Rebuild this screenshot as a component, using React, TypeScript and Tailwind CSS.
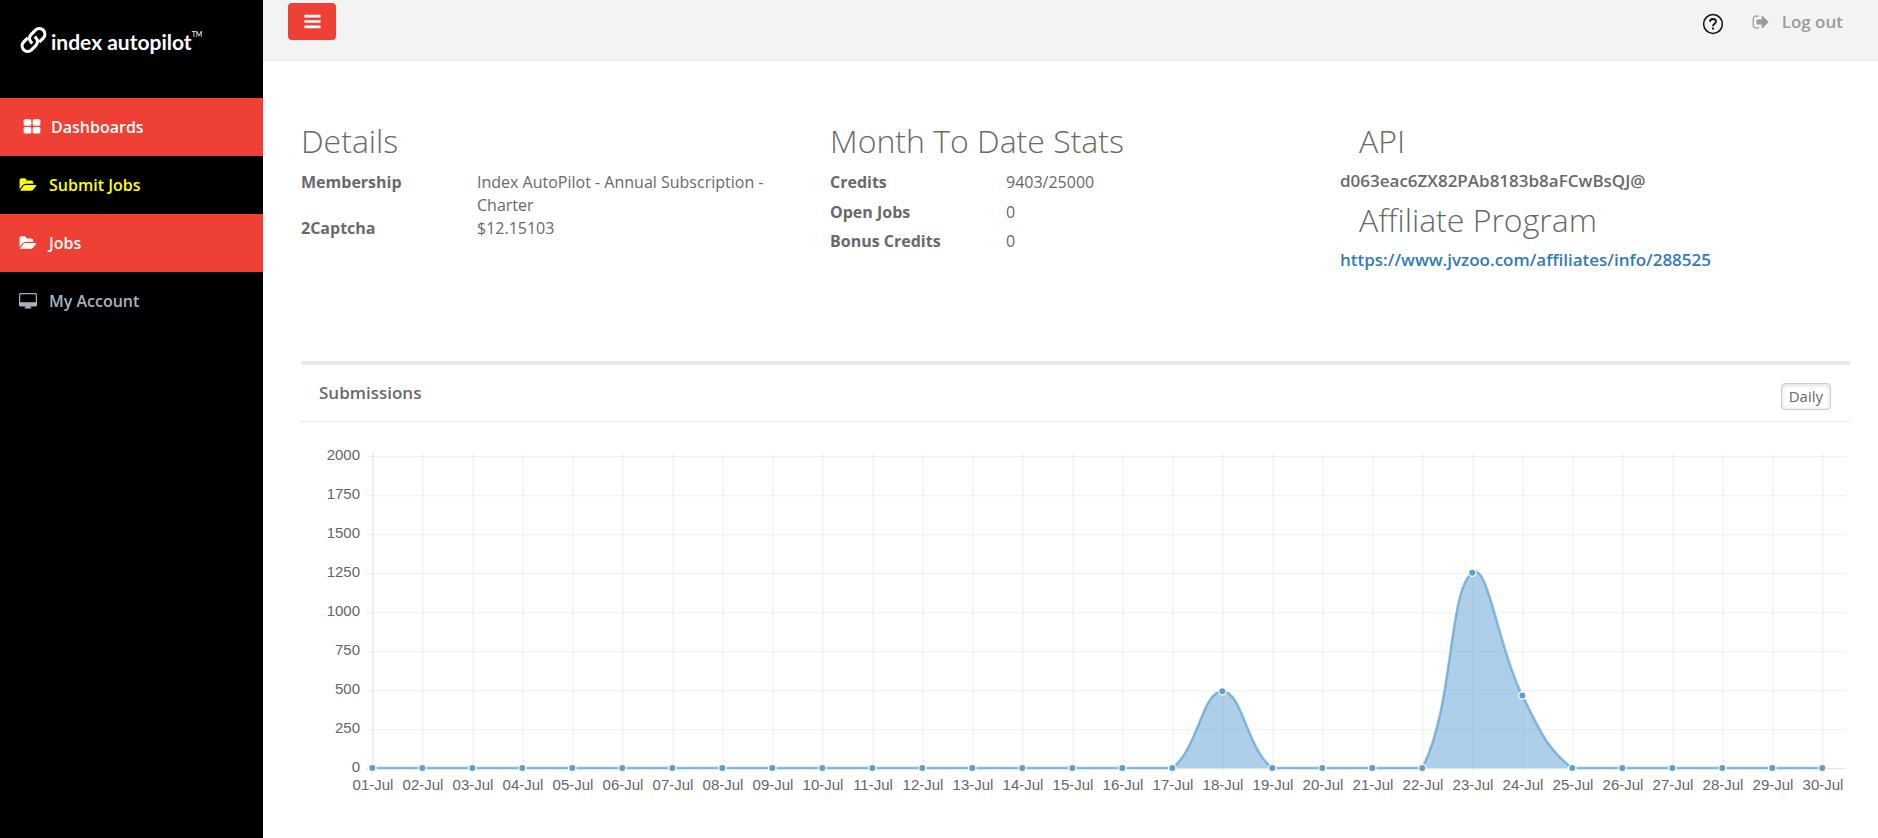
import type { ReactNode } from 'react';

const FOLDER_OPEN =
  'M1943 952q0 31-31 66l-336 396q-43 51-120.500 86.500t-143.500 35.500h-1088q-34 0-60.500-13t-26.500-43q0-31 31-66l336-396q43-51 120.500-86.500t143.500-35.500h1088q34 0 60.500 13t26.500 43zm-343-344v160h-832q-94 0-197 47.500t-164 119.500l-337 396-5 6q0-4-.5-12.500t-.5-12.500v-960q0-92 66-158t158-66h320q92 0 158 66t66 158v32h544q92 0 158 66t66 158z';
const TH_LARGE =
  'M832 1024v384q0 52-38 90t-90 38h-512q-52 0-90-38t-38-90v-384q0-52 38-90t90-38h512q52 0 90 38t38 90zm0-768v384q0 52-38 90t-90 38h-512q-52 0-90-38t-38-90v-384q0-52 38-90t90-38h512q52 0 90 38t38 90zm896 768v384q0 52-38 90t-90 38h-512q-52 0-90-38t-38-90v-384q0-52 38-90t90-38h512q52 0 90 38t38 90zm0-768v384q0 52-38 90t-90 38h-512q-52 0-90-38t-38-90v-384q0-52 38-90t90-38h512q52 0 90 38t38 90z';
const BARS =
  'M1664 1344v128q0 26-19 45t-45 19h-1408q-26 0-45-19t-19-45v-128q0-26 19-45t45-19h1408q26 0 45 19t19 45zm0-512v128q0 26-19 45t-45 19h-1408q-26 0-45-19t-19-45v-128q0-26 19-45t45-19h1408q26 0 45 19t19 45zm0-512v128q0 26-19 45t-45 19h-1408q-26 0-45-19t-19-45v-128q0-26 19-45t45-19h1408q26 0 45 19t19 45z';
const SIGN_OUT =
  'M704 1440q0 4 1 20t.5 26.500-3 23.500-10 19.500-20.500 6.500h-320q-119 0-203.500-84.500t-84.500-203.500v-704q0-119 84.500-203.500t203.500-84.500h320q13 0 22.500 9.500t9.500 22.500q0 4 1 20t.5 26.500-3 23.500-10 19.500-20.500 6.500h-320q-66 0-113 47t-47 113v704q0 66 47 113t113 47h312l11.500 1 11.500 3 8 5.500 7 9 2 13.500zm928-544q0 26-19 45l-544 544q-19 19-45 19t-45-19-19-45v-288h-448q-26 0-45-19t-19-45v-384q0-26 19-45t45-19h448v-288q0-26 19-45t45-19 45 19l544 544q19 19 19 45z';

function Glyph({ d, className, wide }: { d: string; className: string; wide?: boolean }) {
  return (
    <svg viewBox={wide ? '0 0 2016 1792' : '0 0 1792 1792'} className={className} fill="currentColor" aria-hidden="true">
      <path d={d} />
    </svg>
  );
}

function DesktopIcon() {
  return (
    <svg viewBox="0 0 18 16" className="h-4 w-[18px]" fill="currentColor" aria-hidden="true">
      <path
        fillRule="evenodd"
        d="M1.500 0h15A1.500 1.500 0 0 1 18 1.500v10.500a1.500 1.500 0 0 1-1.500 1.500H11.500v1h1v1h-7v-1h1v-1h-5A1.500 1.500 0 0 1 0 12V1.500A1.500 1.500 0 0 1 1.500 0zM1.800 1.200a.6.6 0 0 0-.6.600V9.200h15.600V1.800a.6.6 0 0 0-.6-.6z"
      />
    </svg>
  );
}

function Logo() {
  return (
    <a href="#" className="flex h-[98px] items-start pl-5 pt-[26px] text-white">
      <svg viewBox="-13.500 -14 27 28" className="h-7 w-[27px]" fill="none" stroke="currentColor" strokeWidth="3.200" aria-hidden="true">
        <g transform="rotate(-45)">
          <path d="M-2.500 -5.500H-8.300a5.500 5.500 0 0 0 0 11h6a5.500 5.500 0 0 0 5.500 -5.500v-1.500" />
          <path d="M2.500 5.500H8.300a5.500 5.500 0 0 0 0 -11h-6a5.500 5.500 0 0 0 -5.500 5.500v1.500" />
        </g>
      </svg>
      <span className="pl-1 pt-0.5 font-[Lato,sans-serif] text-[21px] font-bold leading-7">index autopilot</span>
      <span className="pt-1 font-[Lato,sans-serif] text-[7px] leading-2">TM</span>
    </a>
  );
}

function NavItem({ icon, label, className }: { icon: ReactNode; label: string; className: string }) {
  return (
    <li>
      <a href="#" className={`flex h-[58px] items-center text-base font-semibold ${className}`}>
        {icon}
        {label}
      </a>
    </li>
  );
}

function Sidebar() {
  return (
    <aside className="w-[263px] shrink-0 bg-black">
      <Logo />
      <nav>
        <ul>
          <NavItem
            icon={<Glyph d={TH_LARGE} className="size-[18px]" />}
            label="Dashboards"
            className="gap-2.5 bg-[#ef4036] pl-[23px] text-white"
          />
          <NavItem
            icon={<Glyph d={FOLDER_OPEN} wide className="h-4 w-[18px]" />}
            label="Submit Jobs"
            className="gap-3 pl-[19px] text-[#ffff00]"
          />
          <NavItem
            icon={<Glyph d={FOLDER_OPEN} wide className="h-4 w-[18px]" />}
            label="Jobs"
            className="gap-3 bg-[#ef4036] pl-[19px] text-white"
          />
          <NavItem icon={<DesktopIcon />} label="My Account" className="gap-3 pl-[19px] text-[#a7b1c2]" />
        </ul>
      </nav>
    </aside>
  );
}

function TopBar() {
  return (
    <header className="flex h-[61px] items-start justify-between border-b border-[#e7eaec] bg-[#f3f3f3] pl-[25px] pr-[35px]">
      <button
        type="button"
        aria-label="Toggle menu"
        className="mt-[3px] flex h-[37px] w-12 items-center justify-center rounded bg-[#ef4036] text-white"
      >
        <Glyph d={BARS} className="size-[19px]" />
      </button>
      <div className="flex items-center pt-2">
        <a href="#" aria-label="Help" className="mr-7 pt-1 text-[#111111]">
          <svg viewBox="0 0 22 22" className="size-[22px]" fill="none" stroke="currentColor" strokeWidth="1.500" aria-hidden="true">
            <circle cx="11" cy="11" r="9.400" />
            <path d="M8 8.800C8 7 9.300 6 11 6s3 1 3 2.600c0 2.200-3 2.200-3 4.600" strokeWidth="1.800" />
            <path d="M11 14.500v2" strokeWidth="1.900" />
          </svg>
        </a>
        <a href="#" className="flex items-center gap-3 text-[17px] font-semibold leading-7 text-[#999c9e]">
          <Glyph d={SIGN_OUT} className="size-[18px]" />
          Log out
        </a>
      </div>
    </header>
  );
}

function Heading({ children, className = '' }: { children: ReactNode; className?: string }) {
  return <h2 className={`text-[32px] font-light leading-[38px] ${className}`}>{children}</h2>;
}

function Stat({ label, value, className }: { label: string; value: string; className: string }) {
  return (
    <div className={`flex leading-[23px] ${className}`}>
      <dt className="w-44 shrink-0 font-bold">{label}</dt>
      <dd>{value}</dd>
    </div>
  );
}

function Summary() {
  return (
    <section className="grid grid-cols-[529fr_510fr_510fr] pt-[61px] text-base">
      <div className="pr-[38px]">
        <Heading>Details</Heading>
        <dl className="pt-[11px]">
          <Stat label="Membership" value="Index AutoPilot - Annual Subscription - Charter" className="" />
          <Stat label="2Captcha" value="$12.15103" className="" />
        </dl>
      </div>
      <div>
        <Heading>Month To Date Stats</Heading>
        <dl className="pt-[11px]">
          <Stat label="Credits" value="9403/25000" className="pb-[7px]" />
          <Stat label="Open Jobs" value="0" className="pb-1.5" />
          <Stat label="Bonus Credits" value="0" className="" />
        </dl>
      </div>
      <div>
        <Heading className="pl-[19px]">API</Heading>
        <p className="pt-[9px] text-[17px] font-semibold leading-[23px]">d063eac6ZX82PAb8183b8aFCwBsQJ@</p>
        <Heading className="pl-[19px] pt-[9px]">Affiliate Program</Heading>
        <a href="#" className="block pt-[9px] text-[17px] font-semibold leading-[23px] text-[#337ab7]">
          https://www.jvzoo.com/affiliates/info/288525
        </a>
      </div>
    </section>
  );
}

const submissions = Array.from({ length: 30 }, (_, i) => {
  const counts: Record<number, number> = { 18: 492, 23: 1252, 24: 465 };
  return { day: `${String(i + 1).padStart(2, '0')}-Jul`, count: counts[i + 1] ?? 0 };
});

const LEFT = 72;
const RIGHT = 1545;
const TOP = 34;
const BOTTOM = 346;
const STEP = 50;
const MAX = 2000;
const TENSION = 0.4;

const yOf = (value: number) => BOTTOM - (value / MAX) * (BOTTOM - TOP);
const points = submissions.map((s, i) => ({ x: LEFT - 1 + i * STEP + 0.3, y: yOf(s.count) }));
const clampY = (y: number) => Math.min(BOTTOM, Math.max(TOP, y));

// Smooth curve: control points follow the slope between each point's neighbours
const controls = points.map((p, i) => {
  const prev = points[i - 1] ?? p;
  const next = points[i + 1] ?? p;
  const before = Math.hypot(p.x - prev.x, p.y - prev.y);
  const after = Math.hypot(next.x - p.x, next.y - p.y);
  const fa = (TENSION * before) / (before + after);
  const fb = (TENSION * after) / (before + after);
  return {
    inX: p.x - fa * (next.x - prev.x),
    inY: clampY(p.y - fa * (next.y - prev.y)),
    outX: p.x + fb * (next.x - prev.x),
    outY: clampY(p.y + fb * (next.y - prev.y)),
  };
});

const linePath = points
  .map((p, i) => {
    if (i === 0) return `M${p.x} ${p.y}`;
    const a = controls[i - 1];
    const b = controls[i];
    return `C${a.outX} ${a.outY} ${b.inX} ${b.inY} ${p.x} ${p.y}`;
  })
  .join(' ');

function SubmissionsChart() {
  const ticks = [0, 250, 500, 750, 1000, 1250, 1500, 1750, 2000];
  return (
    <svg
      viewBox="0 0 1549 380"
      className="block w-full font-['Liberation_Sans',Arial,sans-serif] text-[15px]"
      role="img"
      aria-label="Submissions per day"
    >
      {ticks.map((t) => (
        <g key={t}>
          <line
            x1={LEFT - 7}
            x2={RIGHT}
            y1={yOf(t) + 0.5}
            y2={yOf(t) + 0.5}
            stroke="#000000"
            strokeOpacity={t === 0 ? 0.1 : 0.05}
            strokeWidth="1.250"
          />
          <text x="59" y={yOf(t) + 4} textAnchor="end" fill="#666666">
            {t}
          </text>
        </g>
      ))}
      {submissions.map((s, i) => (
        <g key={s.day}>
          <line
            x1={LEFT + i * STEP}
            x2={LEFT + i * STEP}
            y1="30"
            y2="351"
            stroke="#000000"
            strokeOpacity={i === 0 ? 0.1 : 0.05}
            strokeWidth="1.250"
          />
          <text x={LEFT + i * STEP} y="368" textAnchor="middle" fill="#666666">
            {s.day}
          </text>
        </g>
      ))}
      <path d={`${linePath} V${BOTTOM} H${points[0].x} Z`} fill="#5b9fd3" fillOpacity="0.5" />
      <path d={linePath} fill="none" stroke="#5b9fd3" strokeOpacity="0.7" strokeWidth="2.500" />
      {points.map((p) => (
        <circle key={p.x} cx={p.x} cy={p.y} r="3.700" fill="#5b9fd3" stroke="#ffffff" strokeWidth="1.300" />
      ))}
    </svg>
  );
}

function Submissions() {
  return (
    <section className="mt-[90px] border-t-4 border-[#e7eaec]">
      <div className="flex h-[57px] items-start justify-between border-b border-[#e7eaec] pl-[18px] pr-[19px]">
        <h5 className="pt-4 text-[17px] font-semibold leading-6">Submissions</h5>
        <button
          type="button"
          className="mt-[18px] h-[27px] rounded-[4px] border border-[#cccccc] px-[7px] pb-0.5 text-[15px] leading-5 shadow-[inset_0_1px_5px_rgba(0,0,0,0.15)]"
        >
          Daily
        </button>
      </div>
      <SubmissionsChart />
    </section>
  );
}

export default function App() {
  return (
    <div className="flex min-h-screen bg-white font-['Open_Sans',sans-serif] text-[#676a6c]">
      <Sidebar />
      <div className="min-w-0 flex-1">
        <TopBar />
        <main className="pl-[38px] pr-7">
          <Summary />
          <Submissions />
        </main>
      </div>
    </div>
  );
}
